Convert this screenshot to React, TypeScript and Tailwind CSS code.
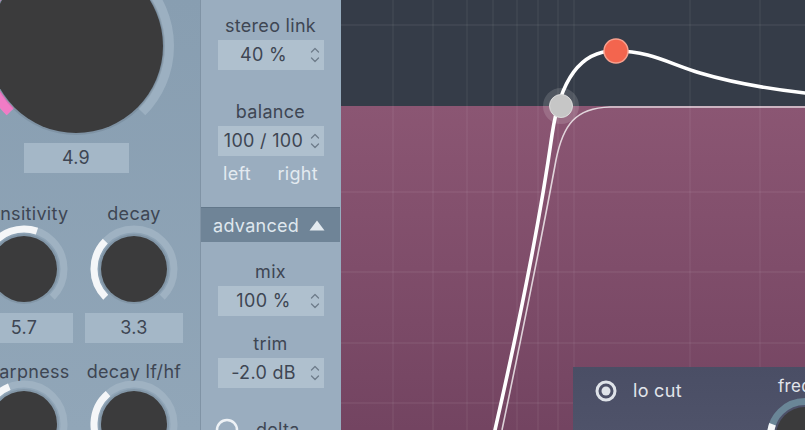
import React from "react";

function arcPath(cx: number, cy: number, r: number, a1: number, a2: number) {
  const rad = (d: number) => (d * Math.PI) / 180;
  const x1 = cx + r * Math.cos(rad(a1));
  const y1 = cy - r * Math.sin(rad(a1));
  const x2 = cx + r * Math.cos(rad(a2));
  const y2 = cy - r * Math.sin(rad(a2));
  const large = a1 - a2 > 180 ? 1 : 0;
  return `M ${x1.toFixed(2)} ${y1.toFixed(2)} A ${r} ${r} 0 ${large} 1 ${x2.toFixed(2)} ${y2.toFixed(2)}`;
}

type KnobProps = {
  w: number;
  h: number;
  cx: number;
  cy: number;
  knobR: number;
  ringR: number;
  sw: number;
  value: number;
  color: string;
  track: string;
  className?: string;
};

function Knob({ w, h, cx, cy, knobR, ringR, sw, value, color, track, className }: KnobProps) {
  const end = 225 - 270 * value;
  return (
    <svg width={w} height={h} className={"block shrink-0 " + (className ?? "")}>
      <path d={arcPath(cx, cy, ringR, 225, -45)} stroke={track} strokeWidth={sw} fill="none" />
      <path d={arcPath(cx, cy, ringR, 225, end)} stroke={color} strokeWidth={sw} fill="none" />
      <circle cx={cx} cy={cy} r={knobR + 2} fill="rgba(40,50,60,0.12)" />
      <circle cx={cx} cy={cy} r={knobR} fill="#3b3b3c" />
    </svg>
  );
}

function Chevrons() {
  return (
    <svg width="12" height="20" viewBox="0 0 12 20" className="block">
      <polyline points="2.5,7 6,3.5 9.5,7" fill="none" stroke="#6f7d8b" strokeWidth="1.3" strokeLinecap="round" strokeLinejoin="round" />
      <polyline points="2.5,13 6,16.5 9.5,13" fill="none" stroke="#6f7d8b" strokeWidth="1.3" strokeLinecap="round" strokeLinejoin="round" />
    </svg>
  );
}

function Spin({ value }: { value: string }) {
  return (
    <div className="w-[106px] h-[30px] bg-[#afc0ce] flex items-center">
      <div className="flex-1 text-center text-[18px] leading-[30px] text-[#3e4653] whitespace-nowrap pl-[2px]">{value}</div>
      <div className="w-[16px] flex justify-center pr-[2px]">
        <Chevrons />
      </div>
    </div>
  );
}

const small = { w: 88, h: 88, cx: 44, cy: 44, knobR: 33, ringR: 40, sw: 7, track: "#9fb2c2" };

export default function App() {
  const vx = [393, 433, 467, 493, 517, 538, 558, 574, 690, 760];
  const hy = [25, 192, 272, 343, 403];
  return (
    <div className="w-[805px] h-[430px] flex overflow-hidden font-['Inter','Noto_Sans',sans-serif] tracking-[0.3px]">
      {/* Left panel */}
      <div className="relative w-[200px] h-full shrink-0 overflow-hidden bg-gradient-to-b from-[#889eb1] to-[#91a6b8]">
        <div className="ml-[-31px] w-[220px] flex flex-col">
          <div className="w-[214px] flex flex-col items-center">
            <Knob
              w={214}
              h={190}
              cx={107}
              cy={100}
              knobR={87}
              ringR={93}
              sw={10}
              value={0.49}
              color="#f07cc6"
              track="#9cb0c1"
              className="mt-[-54px]"
            />
            <div className="mt-[7px] w-[105px] h-[30px] bg-[#a4b7c7] text-center text-[18px] leading-[30px] text-[#3e4653]">4.9</div>
          </div>
          <div className="grid grid-cols-[110px_110px] mt-[30px] text-[#3e4653]">
            <div className="flex flex-col items-center">
              <div className="text-[18px] leading-[22px] whitespace-nowrap">sensitivity</div>
              <Knob {...small} value={0.57} color="#f4f6f8" />
              <div className="w-[98px] h-[30px] bg-[#a4b7c7] text-center text-[18px] leading-[30px]">5.7</div>
              <div className="mt-[18px] text-[18px] leading-[22px] whitespace-nowrap">sharpness</div>
              <Knob {...small} value={0.42} color="#f4f6f8" className="mt-[-3px]" />
            </div>
            <div className="flex flex-col items-center">
              <div className="text-[18px] leading-[22px] whitespace-nowrap">decay</div>
              <Knob {...small} value={0.33} color="#f4f6f8" />
              <div className="w-[98px] h-[30px] bg-[#a4b7c7] text-center text-[18px] leading-[30px]">3.3</div>
              <div className="mt-[18px] text-[18px] leading-[22px] whitespace-nowrap">decay lf/hf</div>
              <Knob {...small} value={0.35} color="#f4f6f8" className="mt-[-3px]" />
            </div>
          </div>
        </div>
      </div>

      {/* Middle panel */}
      <div className="w-[140px] h-full shrink-0 bg-[#9aadbf] border-l border-[#8093a5] flex flex-col items-center text-[#3e4653] overflow-hidden">
        <div className="shrink-0 mt-[15px] text-[18px] leading-[22px]">stereo link</div>
        <div className="shrink-0 mt-[3px]">
          <Spin value="40 %" />
        </div>
        <div className="shrink-0 mt-[31px] text-[18px] leading-[22px]">balance</div>
        <div className="shrink-0 mt-[3px]">
          <Spin value="100 / 100" />
        </div>
        <div className="shrink-0 mt-[7px] w-[95px] flex justify-between text-[18px] leading-[22px] text-[#e3eaf0]">
          <span>left</span>
          <span>right</span>
        </div>
        <div className="shrink-0 mt-[22px] w-full h-[35px] border-t border-[#62778a] bg-[#6f8497] flex items-center pl-[12px] text-[#dfe7ee] text-[18px]">
          <span>advanced</span>
          <svg width="16" height="11" viewBox="0 0 16 11" className="ml-[10px] block">
            <polygon points="8,0.5 15.5,10.5 0.5,10.5" fill="#e3eaf0" />
          </svg>
        </div>
        <div className="shrink-0 mt-[19px] text-[18px] leading-[22px]">mix</div>
        <div className="shrink-0 mt-[3px]">
          <Spin value="100 %" />
        </div>
        <div className="shrink-0 mt-[17px] text-[18px] leading-[22px]">trim</div>
        <div className="shrink-0 mt-[3px]">
          <Spin value="-2.0 dB" />
        </div>
        <div className="shrink-0 mt-[30px] w-full flex items-center pl-[14px]">
          <svg width="24" height="24" viewBox="0 0 24 24" className="block">
            <circle cx="12" cy="12" r="10" fill="none" stroke="#eef2f6" strokeWidth="2.5" />
          </svg>
          <span className="ml-[17px] text-[18px] leading-[22px]">delta</span>
        </div>
      </div>

      {/* Graph */}
      <div className="relative flex-1 h-full border-l border-[#97adbf] bg-[#353c48] overflow-hidden">
        <svg className="absolute inset-0 block" width="464" height="430" viewBox="341 0 464 430">
          <defs>
            <linearGradient id="pinkg" x1="0" y1="0" x2="0" y2="1">
              <stop offset="0" stopColor="#8b5673" />
              <stop offset="1" stopColor="#734461" />
            </linearGradient>
          </defs>
          <rect x="341" y="106" width="464" height="324" fill="url(#pinkg)" />
          {vx.map((x) => (
            <line key={"v" + x} x1={x} y1={0} x2={x} y2={430} stroke="rgba(255,255,255,0.09)" strokeWidth="1" />
          ))}
          {hy.map((y) => (
            <line key={"h" + y} x1={341} y1={y} x2={805} y2={y} stroke="rgba(255,255,255,0.1)" strokeWidth="1" />
          ))}
          <path
            d="M502 430 C525 320 545 220 556 160 C563 125 575 108 610 107 L805 107"
            fill="none"
            stroke="rgba(255,255,255,0.75)"
            strokeWidth="1.6"
          />
          <path
            d="M495 430 C520 320 540 220 552 135 C560 80 580 50 616 51 C650 51 670 64 700 73 C730 82 770 89 805 93"
            fill="none"
            stroke="#ffffff"
            strokeWidth="3.6"
            strokeLinecap="round"
          />
          <circle cx="561" cy="106" r="18" fill="rgba(255,255,255,0.14)" />
          <circle cx="561" cy="106" r="11.5" fill="#c6c6c6" stroke="#dcdcdc" strokeWidth="1" />
          <circle cx="616" cy="51" r="12" fill="#f3654e" stroke="#f8a08e" strokeWidth="1.5" />
        </svg>

        {/* lo cut card */}
        <div className="absolute left-[232px] top-[367px] w-[240px] h-[70px] bg-gradient-to-b from-[#4a4e65] to-[#4f536a] overflow-hidden">
          <div className="flex items-center pl-[22px] pt-[13px]">
            <svg width="22" height="22" viewBox="0 0 22 22" className="block">
              <circle cx="11" cy="11" r="9" fill="none" stroke="#dfe3e9" strokeWidth="3" />
              <circle cx="11" cy="11" r="4.5" fill="#dfe3e9" />
            </svg>
            <span className="ml-[16px] text-[18px] leading-[22px] text-[#e2e5eb]">lo cut</span>
          </div>
          <span className="absolute left-[205px] top-[8px] text-[17px] leading-[22px] text-[#e2e5eb]">freq</span>
          <svg className="absolute left-[180px] top-[20px] block" width="80" height="60" viewBox="0 0 80 60">
            <path d={arcPath(52, 49, 34.5, 225, -45)} stroke="#6a8697" strokeWidth="7" fill="none" />
            <path d={arcPath(52, 49, 34.5, 225, 160)} stroke="#f4f6f8" strokeWidth="7" fill="none" />
            <circle cx="52" cy="49" r="29" fill="#3b3b3c" />
          </svg>
        </div>
      </div>
    </div>
  );
}
